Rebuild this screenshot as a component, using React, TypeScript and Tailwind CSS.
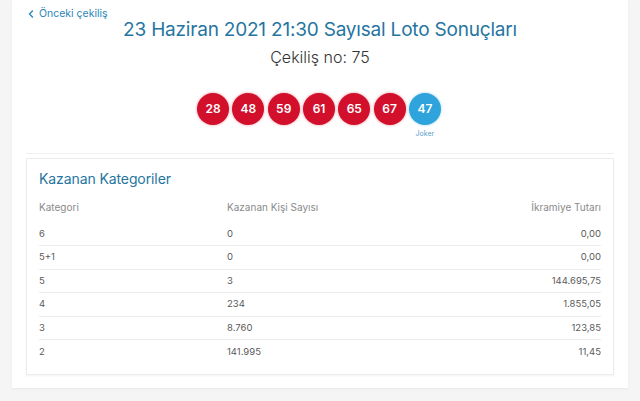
import React from 'react';

const balls = ['28', '48', '59', '61', '65', '67'];

const rows: { kategori: string; kisi: string; tutar: string }[] = [
    { kategori: '6', kisi: '0', tutar: '0,00' },
    { kategori: '5+1', kisi: '0', tutar: '0,00' },
    { kategori: '5', kisi: '3', tutar: '144.695,75' },
    { kategori: '4', kisi: '234', tutar: '1.855,05' },
    { kategori: '3', kisi: '8.760', tutar: '123,85' },
    { kategori: '2', kisi: '141.995', tutar: '11,45' },
];

const Ball: React.FC<{ value: string; joker?: boolean }> = ({ value, joker }) => (
    <div className="flex flex-col items-center w-8">
        <div
            className={
                joker
                    ? 'w-8 h-8 rounded-full bg-[#2ea3dc] shadow-[0_0_3px_rgba(46,163,220,0.45)] flex items-center justify-center text-white text-[12px] font-semibold'
                    : 'w-8 h-8 rounded-full bg-[#d2102b] shadow-[0_0_3px_rgba(210,16,43,0.45)] flex items-center justify-center text-white text-[12px] font-semibold'
            }
        >
            {value}
        </div>
        {joker && <span className="text-[7px] text-[#5b9fcc] mt-[5px] leading-none">Joker</span>}
    </div>
);

const App: React.FC = () => {
    return (
        <div className="w-[640px] h-[401px] overflow-hidden bg-[#f5f5f5] px-3 font-['Inter','Noto_Sans',sans-serif]">
            <div className="bg-white h-[388px] shadow-[0_1px_2px_rgba(0,0,0,0.06)] px-[14px] pt-[6px]">
                <a className="flex items-center gap-[5px] text-[10.5px] text-[#2b86b8] ml-[2px] h-[15px]">
                    <svg width="6" height="8" viewBox="0 0 6 8" fill="none">
                        <path d="M4.5 1 L1.5 4 L4.5 7" stroke="#2b86b8" strokeWidth="1.4" strokeLinecap="round" />
                    </svg>
                    Önceki çekiliş
                </a>
                <h1 className="text-center text-[19px] tracking-[-0.2px] text-[#26759f] leading-[24px] mt-[-3px]">
                    23 Haziran 2021 21:30 Sayısal Loto Sonuçları
                </h1>
                <p className="text-center text-[16px] font-light text-[#333] leading-[20px] mt-[5px]">Çekiliş no: 75</p>
                <div className="flex justify-center gap-[3.3px] mt-[26px] ml-[-2px]">
                    {balls.map((b) => (
                        <Ball key={b} value={b} />
                    ))}
                    <Ball value="47" joker />
                </div>
                <div className="border-t border-[#f0f0f0] mt-[16px] pt-[4px]">
                    <div className="border border-[#ececec] shadow-[0_1px_2px_rgba(0,0,0,0.05)] px-[12px] pt-[10px] pb-[11px]">
                        <h2 className="text-[14px] tracking-[-0.1px] text-[#26759f] leading-[20px]">Kazanan Kategoriler</h2>
                        <div className="grid grid-cols-[188px_1fr_1fr] text-[10px] text-[#8a8a8a] h-[31px] items-center mt-[3px]">
                            <span>Kategori</span>
                            <span>Kazanan Kişi Sayısı</span>
                            <span className="text-right">İkramiye Tutarı</span>
                        </div>
                        {rows.map((r, i) => (
                            <div
                                key={r.kategori}
                                className={
                                    i < rows.length - 1
                                        ? 'grid grid-cols-[188px_1fr_1fr] text-[9.5px] text-[#5a5a5a] h-[23.4px] items-center border-b border-[#ececec]'
                                        : 'grid grid-cols-[188px_1fr_1fr] text-[9.5px] text-[#5a5a5a] h-[23.4px] items-center'
                                }
                            >
                                <span>{r.kategori}</span>
                                <span>{r.kisi}</span>
                                <span className="text-right">{r.tutar}</span>
                            </div>
                        ))}
                    </div>
                </div>
            </div>
        </div>
    );
};

export default App;
